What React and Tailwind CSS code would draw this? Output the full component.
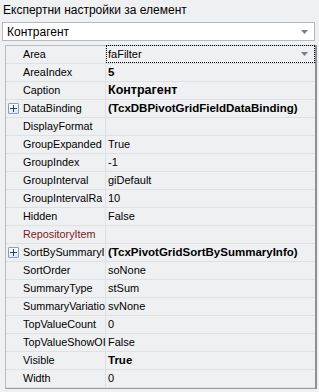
const rows = [
  { name: 'Area', value: 'faFilter', selected: true },
  { name: 'AreaIndex', value: '5', bold: true },
  { name: 'Caption', value: 'Контрагент', bold: true, cyr: true },
  { name: 'DataBinding', value: '(TcxDBPivotGridFieldDataBinding)', bold: true, expand: true },
  { name: 'DisplayFormat', value: '' },
  { name: 'GroupExpanded', value: 'True' },
  { name: 'GroupIndex', value: '-1' },
  { name: 'GroupInterval', value: 'giDefault' },
  { name: 'GroupIntervalRa', value: '10' },
  { name: 'Hidden', value: 'False' },
  { name: 'RepositoryItem', value: '', red: true },
  { name: 'SortBySummaryI', value: '(TcxPivotGridSortBySummaryInfo)', bold: true, expand: true },
  { name: 'SortOrder', value: 'soNone' },
  { name: 'SummaryType', value: 'stSum' },
  { name: 'SummaryVariatio', value: 'svNone' },
  { name: 'TopValueCount', value: '0' },
  { name: 'TopValueShowOI', value: 'False' },
  { name: 'Visible', value: 'True', bold: true },
  { name: 'Width', value: '0' },
]

function Arrow() {
  return (
    <svg width="7" height="4" viewBox="0 0 7 4" className="shrink-0">
      <path d="M0 0h7L3.5 4z" fill="#7b7e84" />
    </svg>
  )
}

function PlusBox() {
  return (
    <div className="w-[11px] h-[11px] border border-[#8c9fbd] rounded-[1px] bg-gradient-to-b from-white to-[#dfe6f1] flex items-center justify-center">
      <svg width="7" height="7" viewBox="0 0 7 7">
        <path d="M0 3.5h7M3.5 0v7" stroke="#2c3f6b" strokeWidth="1" />
      </svg>
    </div>
  )
}

export default function App() {
  return (
    <div className="w-[319px] h-[392px] bg-[#eff0f2] text-[11px] text-black font-['Tahoma','Liberation_Sans',sans-serif] overflow-hidden">
      <div className="h-[22px] pl-[3px] pt-[3px] leading-[14px] text-[12px]">Експертни настройки за елемент</div>

      <div className="mx-[2px] mr-[4px] h-[19px] bg-white border border-[#b4b8bf] flex items-center pl-[4px] pr-[6px]">
        <span className="flex-1 leading-[14px] text-[12px]">Контрагент</span>
        <Arrow />
      </div>

      <div className="mt-[4px] ml-[5px] mr-[2px] h-[344px] border-t border-l border-[#b8bcc2] border-r-2 border-r-[#8d9095] border-b border-b-[#9a9da2]">
        {rows.map((r) => (
          <div key={r.name} className="h-[18px] flex border-b border-[#dfe0e3]">
            <div className="w-[17px] shrink-0 flex items-center pl-[2px]">
              {r.expand && <PlusBox />}
            </div>
            <div
              className={`w-[83px] shrink-0 whitespace-nowrap leading-[17px] text-[10.8px] border-r border-[#dfe0e3] ${r.red ? 'text-[#7d1a1a]' : ''}`}
            >
              {r.name}
            </div>
            {r.selected ? (
              <div className="flex-1 flex items-center border border-dotted border-black pl-[1px] pr-[6px] -mt-px h-[18px]">
                <span className="flex-1 leading-[14px]">{r.value}</span>
                <Arrow />
              </div>
            ) : (
              <div
                className={`flex-1 pl-[2px] whitespace-nowrap leading-[17px] ${r.bold ? 'font-bold' : ''} ${r.bold && r.cyr ? 'text-[12.5px]' : r.bold ? 'text-[11.5px]' : ''}`}
              >
                {r.value}
              </div>
            )}
          </div>
        ))}
      </div>
    </div>
  )
}
